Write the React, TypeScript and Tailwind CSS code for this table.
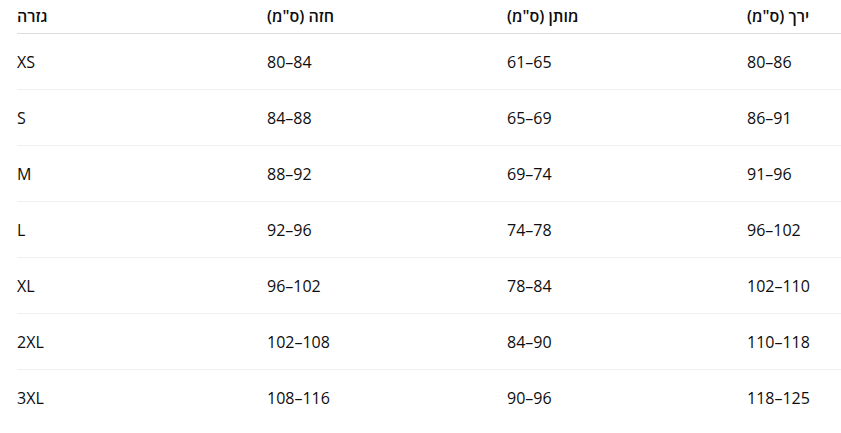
const headers = ["גזרה", 'חזה (ס"מ)', 'מותן (ס"מ)', 'ירך (ס"מ)']

const rows = [
  ["XS", "80–84", "61–65", "80–86"],
  ["S", "84–88", "65–69", "86–91"],
  ["M", "88–92", "69–74", "91–96"],
  ["L", "92–96", "74–78", "96–102"],
  ["XL", "96–102", "78–84", "102–110"],
  ["2XL", "102–108", "84–90", "110–118"],
  ["3XL", "108–116", "90–96", "118–125"],
]

const App = () => {
  return (
    <div className="w-full h-[433px] bg-white pl-[17px] text-[16px] text-[#0d0d0d] font-['Open_Sans','Liberation_Sans',sans-serif] overflow-hidden">
      <div className="grid grid-cols-[250px_240px_240px_1fr] h-[34px] items-center border-b border-[#dcdcdc] pb-[2px]">
        {headers.map((h) => (
          <div key={h} dir="rtl" className="text-left font-semibold">{h}</div>
        ))}
      </div>
      {rows.map((r) => (
        <div key={r[0]} className="grid grid-cols-[250px_240px_240px_1fr] h-[56px] items-center border-b border-[#efefef] last:border-b-0">
          {r.map((c, i) => (
            <div key={i}>{c}</div>
          ))}
        </div>
      ))}
    </div>
  )
}

export default App
